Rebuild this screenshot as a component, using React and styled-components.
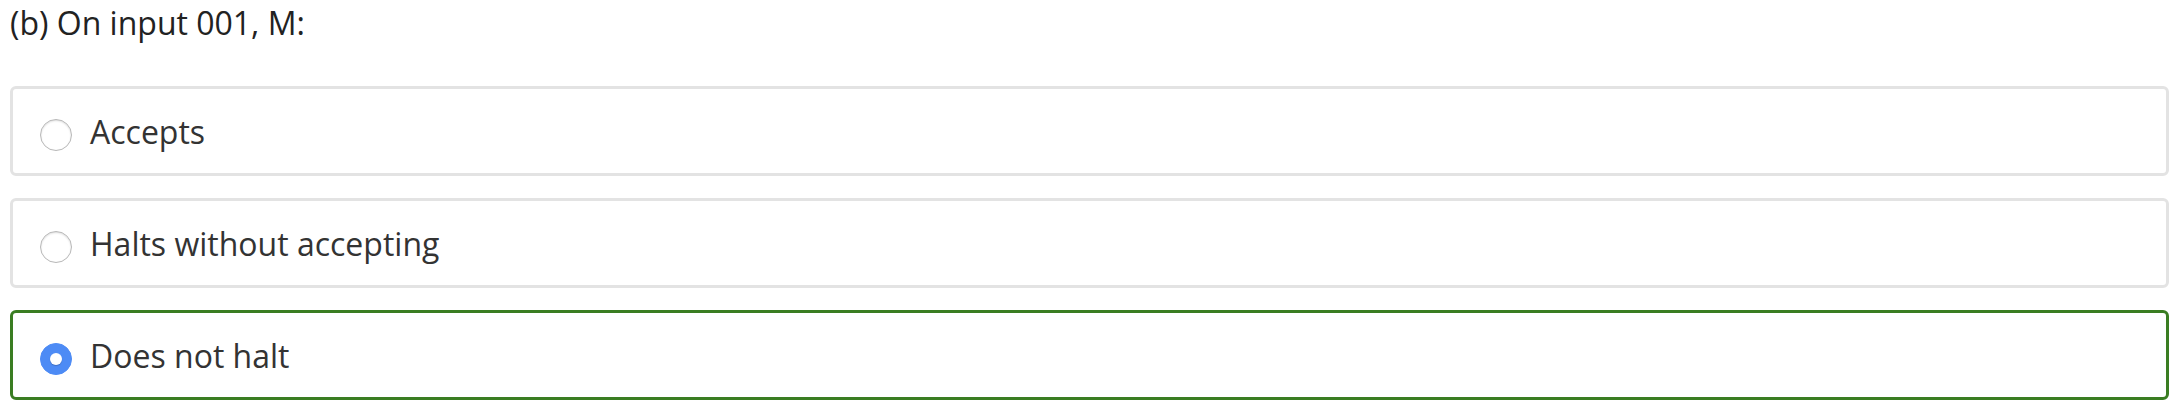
import React from 'react'
import styled, { createGlobalStyle } from 'styled-components'

const GlobalStyle = createGlobalStyle`
  body {
    margin: 0;
    background: #fff;
    font-family: "Open Sans", "Liberation Sans", sans-serif;
    color: #333;
  }
`

const Question = styled.div`
  padding: 1px 13px 0 10px;
`

const Prompt = styled.div`
  font-size: 32px;
  line-height: 44px;
  color: #222;
  margin-bottom: 41px;
`

const Options = styled.div`
  display: flex;
  flex-direction: column;
  gap: 22px;
`

const Option = styled.label`
  display: flex;
  align-items: center;
  box-sizing: border-box;
  height: 90px;
  padding-left: 27px;
  border: 3px solid ${p => (p.selected ? '#3a7d22' : '#e3e3e3')};
  border-radius: 6px;
  cursor: pointer;
`

const Radio = styled.span`
  position: relative;
  width: 32px;
  height: 32px;
  box-sizing: border-box;
  border-radius: 50%;
  margin-top: 8px;
  margin-right: 18px;
  flex-shrink: 0;
  background: ${p => (p.checked ? '#4d8bf5' : '#fff')};
  border: 1px solid ${p => (p.checked ? '#4d8bf5' : '#b8b8b8')};
  box-shadow: ${p => (p.checked ? 'none' : 'inset 0 1px 2px rgba(0,0,0,0.14)')};

  &::after {
    content: '';
    display: ${p => (p.checked ? 'block' : 'none')};
    position: absolute;
    left: 50%;
    top: 50%;
    width: 12px;
    height: 12px;
    margin: -6px 0 0 -6px;
    border-radius: 50%;
    background: #fff;
    box-shadow: 0 1px 1px rgba(0,0,0,0.2);
  }
`

const OptionText = styled.span`
  font-size: 32px;
  color: #333;
`

const options = ['Accepts', 'Halts without accepting', 'Does not halt']

export default function App() {
  const selected = 2
  return (
    <>
      <GlobalStyle />
      <Question>
        <Prompt>(b) On input 001, M:</Prompt>
        <Options>
          {options.map((text, i) => (
            <Option key={text} selected={i === selected}>
              <Radio checked={i === selected} />
              <OptionText>{text}</OptionText>
            </Option>
          ))}
        </Options>
      </Question>
    </>
  )
}
